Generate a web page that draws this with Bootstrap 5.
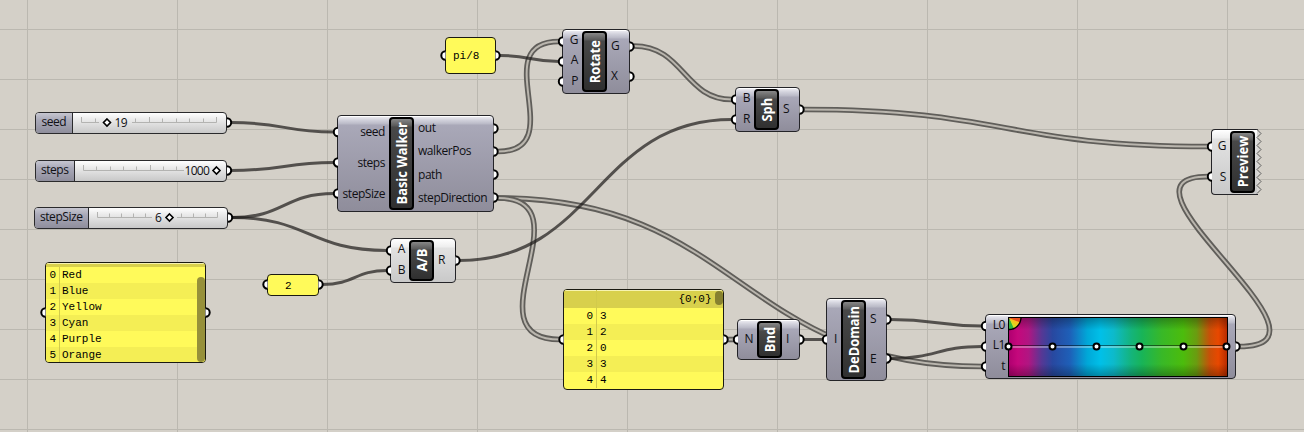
<!DOCTYPE html>
<html lang="en">
<head>
<meta charset="utf-8">
<title>Basic Walker</title>
<link href="https://cdn.jsdelivr.net/npm/bootstrap@5.3.0/dist/css/bootstrap.min.css" rel="stylesheet">
<style>
  body { margin: 0; background: #d4d0c8; font-family: "Open Sans", "Noto Sans", sans-serif; font-size: 12px; letter-spacing: -.45px; line-height: 16px; color: #101014; }
  .canvas { width: 1304px; height: 432px; background: #d4d0c8; }
  .layer { left: 0; top: 0; width: 1304px; height: 432px; pointer-events: none; }
  .grid-lines { fill: none; stroke: #bbb8b0; stroke-width: 1; }
  .wire { fill: none; stroke: #1c1a18; stroke-opacity: .7; stroke-width: 3; }
  .wire-out { fill: none; stroke: #605e5a; stroke-width: 5.6; }
  .wire-in { fill: none; stroke: #bab6ae; stroke-width: 2; }
  .plug { fill: #fff; stroke: #000; stroke-width: 2; }

  .node { border: 1.5px solid #242428; border-radius: 4px; background: linear-gradient(#f2f1f6 0, #d2d2dc 4px, #b9b9c6 8px, #a9a8b8 9px, #8f8d9b 100%); box-shadow: inset 0 1px 0 #fff; padding: 1px 0; }
  .node-light { background: linear-gradient(#fff 0, #eee 8px, #e2e2e2 9px, #c9c9c9 100%); }
  .tag { width: 25px; flex: none; border: 2px solid #000; border-radius: 4px; color: #fff; font-weight: 700; font-size: 14.8px; letter-spacing: 0; line-height: 1; background: linear-gradient(#878787 0, #595959 7px, #484848 8px, #303030 100%); }
  .tag span { writing-mode: vertical-rl; transform: rotate(180deg) scaleY(.87); white-space: nowrap; }
  .ports > div { display: flex; align-items: center; flex: 1 1 0; white-space: nowrap; }
  .ports-in { text-align: right; }
  .ports-in > div { justify-content: flex-end; padding: 0 4px 2px 0; }
  .ports-out > div { padding: 0 0 1px 4px; }

  #walker { left: 337px; top: 115px; width: 157px; height: 97px; } #walker .ports-in { width: 51px; }
  #divide { left: 390px; top: 238px; width: 66px; height: 45px; } #divide .ports-in { width: 18px; }
  #rotate { left: 562px; top: 29px; width: 68px; height: 65px; } #rotate .ports-in { width: 19px; }
  #sphere { left: 735px; top: 87px; width: 65px; height: 45px; } #sphere .ports-in { width: 18px; }
  #bounds { left: 737px; top: 319px; width: 63px; height: 41px; } #bounds .ports-in { width: 19px; }
  #domain { left: 826px; top: 298px; width: 61px; height: 83px; } #domain .ports-in { width: 14px; }
  #preview { left: 1211px; top: 129px; width: 47px; height: 66px; border-right: 0; border-radius: 4px 0 0 4px; } #preview .ports-in { width: 18px; }
  #gradient { left: 985px; top: 314px; width: 251px; height: 65px; } #gradient .ports-in { width: 22px; }
  #gradient .ports-in > div { padding-right: 3px; }
  .ramp { width: 220px; height: 60px; margin-top: 1px; flex: none; border: 1px solid #000;
    background: linear-gradient(rgba(0,0,0,.28), transparent 12px, transparent 46px, rgba(0,0,0,.28)),
      linear-gradient(90deg, #b00070 0, #c5087c 4%, #b01682 9%, #563895 15%, #2848a0 20%, #1e60b8 28%, #00a8d8 36%, #00c0e8 42%, #0dbacb 48%, #14b47c 56%, #18b458 61%, #38b828 70%, #4cbc0c 80%, #6a9c10 86%, #c85008 92%, #e84800 96%, #b82c00 100%); }

  .note { background: #fffa5a; border: 1.5px solid #1a1a12; border-radius: 4px; font-family: "Liberation Mono", monospace; font-size: 11px; letter-spacing: 0; line-height: 16px; color: #000; overflow: hidden; }
  .note .line { height: 16px; display: flex; white-space: pre; }
  .note .line:nth-child(odd) { background: #f4ee55; }
  .note .idx { text-align: right; flex: none; border-right: 1px solid #d2cb4b; padding-right: 3px; }
  .note .val { padding-left: 2px; }
  .note .cap { background: #d8d04c; box-shadow: inset 0 1px 0 #f7f3b0; }
  #colors { left: 45px; top: 262px; width: 161px; height: 101px; } #colors .idx { width: 14px; } #colors .cap { height: 4px; }
  #values { left: 563px; top: 289px; width: 161px; height: 101px; } #values .idx { width: 33px; } #values .cap { height: 18px; padding-right: 11.5px; } #values .val { padding-left: 3px; }
  #values .path-name { line-height: 19px; }
  #pi { left: 445px; top: 37px; width: 51px; height: 37px; padding: 1px 0 0 7px; }
  #two { left: 267px; top: 274px; width: 52px; height: 22px; padding: 2px 0 0 17px; }
  .thumb { width: 8px; background: #96903a; border-radius: 4px; }
  #colors .thumb { right: 0; top: 14px; height: 85px; }
  #values .thumb { right: 0; top: 1px; height: 14px; background: #87812f; }

  .slider { height: 21.5px; border: 1.5px solid #2a2a2c; border-radius: 4px; background: linear-gradient(#fff, #ececec 30%, #c8c8c8); overflow: hidden; }
  .slider .label { background: linear-gradient(#c6c6d0, #a9a9b8 35%, #8f8e9c); border-right: 1.5px solid #2a2a2c; flex: none; padding-bottom: 2px; }
  #seed { left: 35px; top: 112px; width: 192px; } #seed .label { width: 36.5px; }
  #steps { left: 35px; top: 160px; width: 192px; } #steps .label { width: 38.5px; }
  #size { left: 34px; top: 207px; width: 194px; } #size .label { width: 53.5px; }
  .rail { fill: none; stroke: #b3b3b1; stroke-width: 1; }
  .grip { fill: #fff; stroke: #000; stroke-width: 1.6; }
  .num { font-size: 12px; line-height: 16px; letter-spacing: -.7px; }
</style>
</head>
<body>
<main class="canvas position-relative overflow-hidden">
  <svg class="layer position-absolute" viewBox="0 0 1304 432">
    <path class="grid-lines" d="M27.5 0v432M177.5 0v432M327.5 0v432M477.5 0v432M627.5 0v432M777.5 0v432M927.5 0v432M1077.5 0v432M1227.5 0v432M0 29.5h1304M0 79.5h1304M0 129.5h1304M0 179.5h1304M0 229.5h1304M0 279.5h1304M0 329.5h1304M0 379.5h1304M0 429.5h1304"/>
    <g id="double-wires"></g>
    <path class="wire" d="M231 122.500C284 122.500 284 132 334 132"/>
    <path class="wire" d="M231 170.500C284 170.500 284 162.500 334 162.500"/>
    <path class="wire" d="M232 217.500C284 217.500 284 193.500 334 193.500"/>
    <path class="wire" d="M232 217.500C309 217.500 309 250.500 387 250.500"/>
    <path class="wire" d="M322 284.500C355 284.500 355 270.500 387 270.500"/>
    <path class="wire" d="M500 55.500C530 55.500 530 61.500 559 61.500"/>
    <path class="wire" d="M459 260.500C596 260.500 596 119.500 732 119.500"/>
    <path class="wire" d="M803 339.500H824"/>
    <path class="wire" d="M890 319.500C937 319.500 937 326 982 326"/>
    <path class="wire" d="M890 358.500C937 358.500 937 346.500 982 346.500"/>
  </svg>

  <section id="seed" class="slider position-absolute d-flex"><div class="label d-flex align-items-center justify-content-center">seed</div></section>
  <section id="steps" class="slider position-absolute d-flex"><div class="label d-flex align-items-center justify-content-center">steps</div></section>
  <section id="size" class="slider position-absolute d-flex"><div class="label d-flex align-items-center justify-content-center">stepSize</div></section>

  <section id="colors" class="note position-absolute">
    <div class="cap"></div>
    <div class="line"><span class="idx">0</span><span class="val">Red</span></div>
    <div class="line"><span class="idx">1</span><span class="val">Blue</span></div>
    <div class="line"><span class="idx">2</span><span class="val">Yellow</span></div>
    <div class="line"><span class="idx">3</span><span class="val">Cyan</span></div>
    <div class="line"><span class="idx">4</span><span class="val">Purple</span></div>
    <div class="line"><span class="idx">5</span><span class="val">Orange</span></div>
    <i class="thumb position-absolute"></i>
  </section>
  <section id="values" class="note position-absolute">
    <div class="cap d-flex"><span class="idx"></span><span class="path-name ms-auto">{0;0}</span></div>
    <div class="line"><span class="idx">0</span><span class="val">3</span></div>
    <div class="line"><span class="idx">1</span><span class="val">2</span></div>
    <div class="line"><span class="idx">2</span><span class="val">0</span></div>
    <div class="line"><span class="idx">3</span><span class="val">3</span></div>
    <div class="line"><span class="idx">4</span><span class="val">4</span></div>
    <i class="thumb position-absolute"></i>
  </section>
  <section id="pi" class="note position-absolute d-flex align-items-center">pi/8</section>
  <section id="two" class="note position-absolute d-flex align-items-center">2</section>

  <section id="walker" class="node position-absolute d-flex">
    <div class="ports ports-in d-flex flex-column"><div>seed</div><div>steps</div><div>stepSize</div></div>
    <div class="tag d-flex align-items-center justify-content-center"><span>Basic Walker</span></div>
    <div class="ports ports-out d-flex flex-column"><div>out</div><div>walkerPos</div><div>path</div><div>stepDirection</div></div>
  </section>
  <section id="divide" class="node node-light position-absolute d-flex">
    <div class="ports ports-in d-flex flex-column"><div>A</div><div>B</div></div>
    <div class="tag d-flex align-items-center justify-content-center"><span>A/B</span></div>
    <div class="ports ports-out d-flex flex-column"><div>R</div></div>
  </section>
  <section id="rotate" class="node position-absolute d-flex">
    <div class="ports ports-in d-flex flex-column"><div>G</div><div>A</div><div>P</div></div>
    <div class="tag d-flex align-items-center justify-content-center"><span>Rotate</span></div>
    <div class="ports ports-out d-flex flex-column"><div>G</div><div>X</div></div>
  </section>
  <section id="sphere" class="node position-absolute d-flex">
    <div class="ports ports-in d-flex flex-column"><div>B</div><div>R</div></div>
    <div class="tag d-flex align-items-center justify-content-center"><span>Sph</span></div>
    <div class="ports ports-out d-flex flex-column"><div>S</div></div>
  </section>
  <section id="bounds" class="node position-absolute d-flex">
    <div class="ports ports-in d-flex flex-column"><div>N</div></div>
    <div class="tag d-flex align-items-center justify-content-center"><span>Bnd</span></div>
    <div class="ports ports-out d-flex flex-column"><div>I</div></div>
  </section>
  <section id="domain" class="node position-absolute d-flex">
    <div class="ports ports-in d-flex flex-column"><div>I</div></div>
    <div class="tag d-flex align-items-center justify-content-center"><span>DeDomain</span></div>
    <div class="ports ports-out d-flex flex-column"><div>S</div><div>E</div></div>
  </section>
  <section id="gradient" class="node position-absolute d-flex">
    <div class="ports ports-in d-flex flex-column"><div>L0</div><div>L1</div><div>t</div></div>
    <div class="ramp"></div>
  </section>
  <section id="preview" class="node node-light position-absolute d-flex">
    <div class="ports ports-in d-flex flex-column"><div>G</div><div>S</div></div>
    <div class="tag d-flex align-items-center justify-content-center"><span>Preview</span></div>
  </section>

  <svg class="layer position-absolute" viewBox="0 0 1304 432">
    <!-- slider rails -->
    <g class="rail" id="rails"></g>
    <path class="grip" d="M107 119l3.500 3.500-3.500 3.500-3.500-3.500zM216.500 167l3.500 3.500-3.500 3.500-3.500-3.500zM169.500 214l3.500 3.500-3.500 3.500-3.500-3.500z"/>
    <g class="num" fill="#101014">
      <text x="114.500" y="126.500">19</text><text x="184.500" y="174.500">1000</text><text x="155" y="221.500">6</text>
    </g>
    <!-- torn edge of the preview node -->
    <path d="M1257 129.500l4 4-4 4 4 4-4 4 4 4-4 4 4 4-4 4 4 4-4 4 4 4-4 4 4 4-4 4 4 4-4 4" fill="#d8d7d4" stroke="#5a5957" stroke-width="1"/>
    <!-- gradient handles -->
    <path d="M1009 345.500H1227" stroke="#000" stroke-opacity=".5"/>
    <path d="M1009 347H1227" stroke="#fff" stroke-opacity=".65"/>
    <path d="M1009 318h12a12 12 0 0 1-3.500 8.500z" fill="#e8501c"/>
    <path d="M1009 318l11 4.500a12 12 0 0 1-4 5z" fill="#f6c21c"/>
    <path d="M1009 318l8 8.500a12 12 0 0 1-4 2.500z" fill="#d8dc20"/>
    <path d="M1009 318l5 10.700a12 12 0 0 1-5 1z" fill="#30b43c"/>
    <path d="M1021 318a12 12 0 0 1-12 11.500" fill="none" stroke="#000" stroke-width="1.300"/>
    <g class="plug"><circle cx="1008.500" cy="346.500" r="3"/><circle cx="1052.500" cy="346.500" r="3"/><circle cx="1096.500" cy="346.500" r="3"/><circle cx="1139.500" cy="346.500" r="3"/><circle cx="1183.500" cy="346.500" r="3"/><circle cx="1226.500" cy="346.500" r="3"/></g>
    <g class="plug" id="plugs"></g>
  </svg>
</main>
<script src="https://cdn.jsdelivr.net/npm/bootstrap@5.3.0/dist/js/bootstrap.bundle.min.js"></script>
<script>
  // list wires: two strands along one curve
  const wires = [
    'M498 151.500C572 151.500 485 41.500 559 41.500',
    'M634 46C684 46 684 99.500 732 99.500',
    'M804 109.500C1006 109.500 1006 146.500 1208 146.500',
    'M498 198C740 198 740 366.500 982 366.500',
    'M498 198C590 198 466 339.500 560 339.500',
    'M727 339.500H735',
    'M1239 346.500C1355 346.500 1096 176.500 1208 176.500'
  ];
  document.getElementById('double-wires').innerHTML =
    wires.map(d => `<path class="wire-out" d="${d}"/><path class="wire-in" d="${d}"/>`).join('');

  // half-round plugs on the left (in) and right (out) edges
  const ins = [[338,132],[338,162.5],[338,193.5],[391,250.5],[391,270.5],[563,41.5],[563,61.5],[563,81.5],[736,99.5],[736,119.5],[738,339.5],[827,339.5],[986,326],[986,346.5],[986,366.5],[1212,146.5],[1212,176.5],[45.5,312.5],[445.5,55.5],[267.5,284.5],[563.5,339.5]];
  const outs = [[227,122.5],[227,170.5],[228,217.5],[493.500,128.5],[493.500,151.5],[493.500,174.5],[493.500,197.5],[455.500,260.5],[629.5,46.5],[629.5,76.5],[799.5,109.5],[799.5,339.5],[886.5,319.5],[886.5,358.5],[1235.500,346.5],[205.5,312.5],[495.5,55.5],[318.5,284.5],[723.5,339.5]];
  document.getElementById('plugs').innerHTML =
    ins.map(([x, y]) => `<path d="M${x} ${y - 4.2}a4.200 4.200 0 0 0 0 8.400"/>`).join('') +
    outs.map(([x, y]) => `<path d="M${x} ${y - 4.2}a4.200 4.200 0 0 1 0 8.400"/>`).join('');

  // rails: start, end, baseline, and the span left clear for grip and number
  const rails = [[81.5, 216.5, 122.5, 99, 132], [83.5, 216.5, 170.5, 184, 222], [97.5, 217.5, 217.5, 152, 177]];
  document.getElementById('rails').innerHTML = rails.map(([a, b, y, c, e]) => {
    let d = `M${a} ${y}H${c}` + (e < b ? `M${e} ${y}H${b}` : '');
    for (let i = 0; i <= 10; i++) {
      const x = Math.floor(a + (b - a) * i / 10) + .5;
      if (x < c || x > e) d += `M${x} ${y}v${i % 5 ? -4 : -5.5}`;
    }
    return `<path d="${d}"/>`;
  }).join('');
</script>
</body>
</html>
